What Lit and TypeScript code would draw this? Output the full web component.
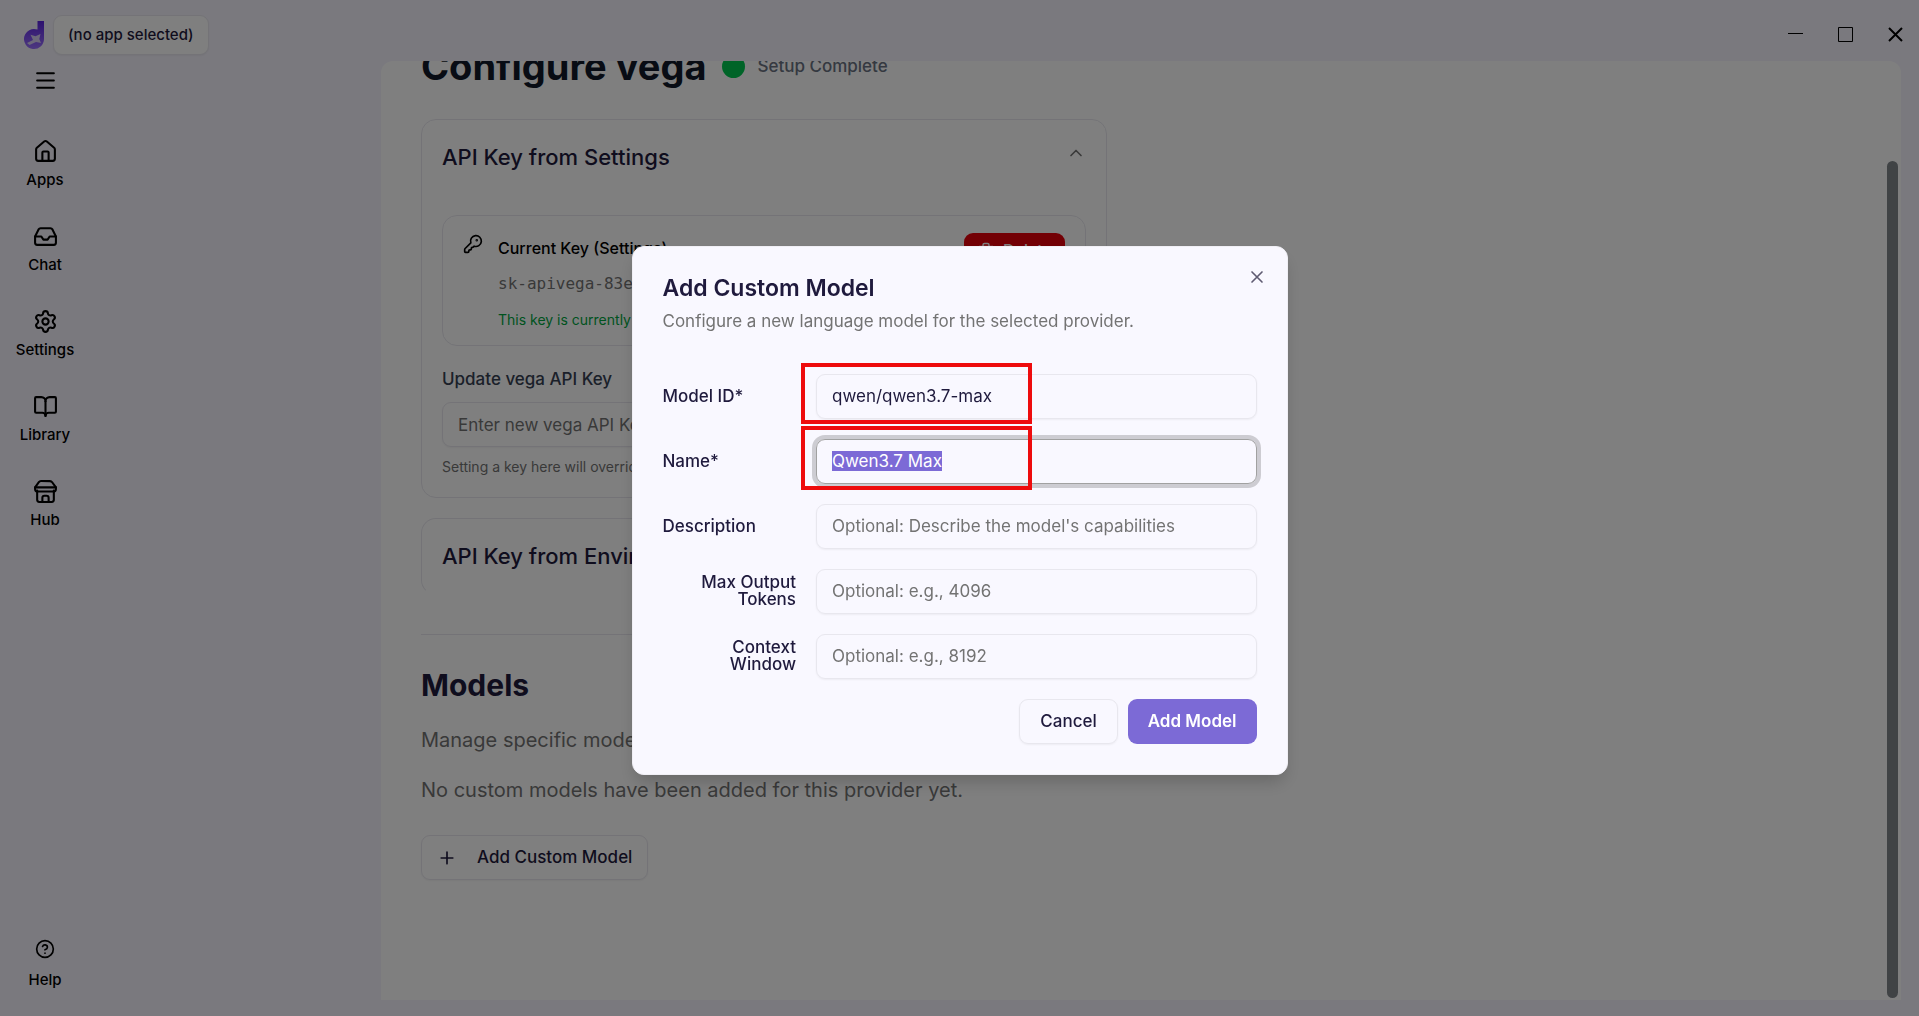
import { LitElement, html, css, svg } from "lit";
import { customElement } from "lit/decorators.js";

const icon = (size: number, body: unknown) => html`<svg
  class="icon"
  width=${size}
  height=${size}
  viewBox="0 0 24 24"
  fill="none"
  stroke="currentColor"
  stroke-width="2"
  stroke-linecap="round"
  stroke-linejoin="round"
  aria-hidden="true"
>${body}</svg>`;

const icons = {
  menu: svg`<path d="M4 5h16M4 12h16M4 19h16"/>`,
  home: svg`<path d="M15 21v-8a1 1 0 0 0-1-1h-4a1 1 0 0 0-1 1v8"/><path d="M3 10a2 2 0 0 1 .709-1.528l7-5.999a2 2 0 0 1 2.582 0l7 5.999A2 2 0 0 1 21 10v9a2 2 0 0 1-2 2H5a2 2 0 0 1-2-2z"/>`,
  inbox: svg`<path d="M22 12h-6l-2 3h-4l-2-3H2"/><path d="M5.45 5.11 2 12v6a2 2 0 0 0 2 2h16a2 2 0 0 0 2-2v-6l-3.45-6.89A2 2 0 0 0 16.76 4H7.24a2 2 0 0 0-1.79 1.11z"/>`,
  settings: svg`<path d="M9.671 4.136a2.34 2.34 0 0 1 4.659 0 2.34 2.34 0 0 0 3.319 1.915 2.34 2.34 0 0 1 2.33 4.033 2.34 2.34 0 0 0 0 3.831 2.34 2.34 0 0 1-2.33 4.033 2.34 2.34 0 0 0-3.319 1.915 2.34 2.34 0 0 1-4.659 0 2.34 2.34 0 0 0-3.32-1.915 2.34 2.34 0 0 1-2.33-4.033 2.34 2.34 0 0 0 0-3.831A2.34 2.34 0 0 1 6.35 6.051a2.34 2.34 0 0 0 3.319-1.915"/><circle cx="12" cy="12" r="3"/>`,
  book: svg`<path d="M12 7v14"/><path d="M3 18a1 1 0 0 1-1-1V4a1 1 0 0 1 1-1h5a4 4 0 0 1 4 4 4 4 0 0 1 4-4h5a1 1 0 0 1 1 1v13a1 1 0 0 1-1 1h-6a3 3 0 0 0-3 3 3 3 0 0 0-3-3z"/>`,
  store: svg`<path d="M4 11v9a2 2 0 0 0 2 2h12a2 2 0 0 0 2-2v-9"/><path d="M15 22v-4a2 2 0 0 0-2-2h-2a2 2 0 0 0-2 2v4"/><path d="M2 8h20"/><path d="M2 8l3.6-4.9A2.6 2.6 0 0 1 7.7 2h8.6a2.6 2.6 0 0 1 2.1 1.1L22 8v1.500a2.500 2.500 0 0 1-2.500 2.500h-15A2.500 2.500 0 0 1 2 9.500z"/>`,
  help: svg`<circle cx="12" cy="12" r="10"/><path d="M9.090 9a3 3 0 0 1 5.830 1c0 2-3 3-3 3"/><path d="M12 17h.01"/>`,
  key: svg`<path d="M2.586 17.414A2 2 0 0 0 2 18.828V21a1 1 0 0 0 1 1h3a1 1 0 0 0 1-1v-1a1 1 0 0 1 1-1h1a1 1 0 0 0 1-1v-1a1 1 0 0 1 1-1h.172a2 2 0 0 0 1.414-.586l.814-.814a6.500 6.500 0 1 0-4-4z"/><circle cx="16.500" cy="7.500" r=".5" fill="currentColor"/>`,
  trash: svg`<path d="M3 6h18M19 6v14a2 2 0 0 1-2 2H7a2 2 0 0 1-2-2V6M8 6V4a2 2 0 0 1 2-2h4a2 2 0 0 1 2 2v2M10 11v6M14 11v6"/>`,
  chevronUp: svg`<path d="m18 15-6-6-6 6"/>`,
  plus: svg`<path d="M5 12h14M12 5v14"/>`,
  close: svg`<path d="M18 6 6 18M6 6l12 12"/>`,
};

const base = css`
  :host, * { box-sizing: border-box; }
  * { margin: 0; }
  button, input { font: inherit; color: inherit; }
  button { cursor: pointer; }
  .icon { display: block; flex: none; }
  .outline {
    display: flex;
    align-items: center;
    background: transparent;
    border: 1px solid var(--line);
    border-radius: 9px;
    box-shadow: 0 1px 2px rgba(0, 0, 0, 0.05);
    font-weight: 500;
    white-space: nowrap;
  }
  .field {
    width: 100%;
    min-width: 0;
    height: 45px;
    padding: 0 15px;
    background: transparent;
    border: 1px solid var(--line);
    border-radius: 9px;
    box-shadow: 0 1px 2px rgba(0, 0, 0, 0.05);
    outline: none;
  }
  .field::placeholder { color: var(--muted); opacity: 1; }
`;

@customElement("title-bar")
class TitleBar extends LitElement {
  static styles = [
    base,
    css`
      :host { display: flex; flex: none; align-items: center; height: 60px; padding: 9px 13px 0 24px; }
      .logo { flex: none; margin-right: 8px; }
      .app { height: 40px; padding: 0 14px; background: #fff; font-size: 15px; }
      .window { display: flex; gap: 29px; margin-left: auto; }
      .control { display: flex; padding: 0; border: 0; background: none; color: #000; }
    `,
  ];
  render() {
    return html`
      <svg class="logo" width="21" height="30" viewBox="0 0 21 30" role="img" aria-label="Home">
        <defs>
          <linearGradient id="violet" x1="0" y1="0" x2="0" y2="1">
            <stop offset="0" stop-color="#5a22e0" />
            <stop offset="1" stop-color="#9a70ff" />
          </linearGradient>
        </defs>
        <path fill="url(#violet)" d="M13.500 1h6.500v18a10 10 0 1 1-6.500-9.400z" />
        <path fill="#d9d0f4" d="M3 23l6-3-2.500-5.200 5 1.400 5-2.200-1.200 5 1.700 4-5-1-6.500 3z" />
      </svg>
      <button class="outline app">(no app selected)</button>
      <div class="window">
        <button class="control" aria-label="Minimize">
          <svg width="21" height="21" viewBox="0 0 21 21"><path d="M3 9.500h15" stroke="#000" /></svg>
        </button>
        <button class="control" aria-label="Maximize">
          <svg width="21" height="21" viewBox="0 0 21 21"><path d="M3.500 3.500h14v14h-14z" fill="none" stroke="#000" /></svg>
        </button>
        <button class="control" aria-label="Close">
          <svg width="21" height="21" viewBox="0 0 21 21"><path d="m4 4 13 13M17 4 4 17" stroke="#000" stroke-width="2" /></svg>
        </button>
      </div>
    `;
  }
}

@customElement("side-nav")
class SideNav extends LitElement {
  static styles = [
    base,
    css`
      :host { display: flex; flex-direction: column; align-items: flex-start; width: 381px; flex: none; padding: 7px 0 23px; }
      .toggle { display: flex; justify-content: center; width: 90px; padding: 0; border: 0; background: none; color: #000; }
      .links { display: flex; flex-direction: column; gap: 31px; margin-top: 46px; }
      .link {
        display: flex; flex-direction: column; align-items: center; gap: 2px;
        width: 90px; color: #000; text-decoration: none;
        font-size: 15px; line-height: 27px; font-weight: 500;
      }
      .help { margin-top: auto; gap: 7px; }
    `,
  ];
  render() {
    const links: [string, unknown][] = [
      ["Apps", icons.home],
      ["Chat", icons.inbox],
      ["Settings", icons.settings],
      ["Library", icons.book],
      ["Hub", icons.store],
    ];
    return html`
      <button class="toggle" aria-label="Toggle sidebar">${icon(25, icons.menu)}</button>
      <nav class="links">
        ${links.map(([label, body]) => html`<a class="link" href="#">${icon(25, body)}${label}</a>`)}
      </nav>
      <a class="link help" href="#">${icon(20, icons.help)}Help</a>
    `;
  }
}

@customElement("provider-page")
class ProviderPage extends LitElement {
  static styles = [
    base,
    css`
      :host {
        position: relative; display: block; flex: 1; min-width: 0; overflow: hidden;
        background: #fff; border-radius: 12px 12px 0 0; color: var(--ink);
      }
      .scroll { height: 100%; overflow-y: auto; scrollbar-width: none; padding: 90px 40px 120px; }
      .column { width: 100%; max-width: 686px; }
      .head { display: flex; align-items: center; gap: 12px; margin-bottom: 30px; line-height: 45px; }
      .title { margin-right: 4px; font-size: 38px; font-weight: 700; color: #101828; white-space: nowrap; }
      .dot { width: 23px; height: 23px; border-radius: 50%; background: #00c950; }
      .status { font-size: 17px; font-weight: 500; color: #6a7282; }
      .card { border: 1px solid var(--line); border-radius: 15px; padding: 20px; }
      .card-closed { margin-top: 20px; border-bottom-color: transparent; }
      .accordion {
        display: flex; justify-content: space-between; align-items: flex-start; width: 100%;
        padding: 0; border: 0; background: none; text-align: left; font-size: 22px; line-height: 35px; font-weight: 500;
      }
      .accordion .icon { margin: 3px 0; color: #737373; }
      .current { display: flex; align-items: flex-start; gap: 15px; margin-top: 40px; padding: 17px 20px 10px; border: 1px solid var(--line); border-radius: 15px; color: #000; }
      .key { padding-top: 1px; }
      .lines { display: flex; flex-direction: column; gap: 6px; flex: 1; min-width: 0; line-height: 30px; }
      .name { font-weight: 500; font-size: 16px; }
      .secret { font-family: "DejaVu Sans Mono", "Liberation Mono", monospace; font-size: 16px; color: #737373; }
      .active { font-size: 14px; color: #00a63e; }
      .delete { display: flex; align-items: center; gap: 8px; height: 35px; padding: 0 13px; border: 0; border-radius: 9px; background: #e7000b; color: #fff; font-weight: 500; font-size: 16px; }
      .label { display: block; margin: 23px 0 13px; line-height: 20px; font-weight: 500; color: #364153; }
      .hint { margin-top: 10px; font-size: 14px; line-height: 20px; color: #737373; }
      .rule { margin: 39px 0 30px; border: 0; border-top: 1px solid var(--line); }
      .heading { font-size: 30px; line-height: 40px; font-weight: 700; }
      .copy { margin-top: 20px; font-size: 20px; line-height: 30px; color: #737373; }
      .add { height: 45px; margin-top: 30px; padding: 0 15px; gap: 20px; }
      .thumb { position: absolute; right: 3px; top: 100px; bottom: 2px; width: 11px; border-radius: 6px; background: #80868b; }
    `,
  ];
  firstUpdated() {
    const pane = this.renderRoot.querySelector(".scroll")!;
    requestAnimationFrame(() => (pane.scrollTop = pane.scrollHeight));
  }
  render() {
    return html`
      <main class="scroll">
        <div class="column">
          <header class="head">
            <h1 class="title">Configure vega</h1>
            <span class="dot"></span>
            <span class="status">Setup Complete</span>
          </header>
          <section class="card">
            <button class="accordion" aria-expanded="true">API Key from Settings ${icon(20, icons.chevronUp)}</button>
            <div class="current">
              <span class="key">${icon(20, icons.key)}</span>
              <div class="lines">
                <p class="name">Current Key (Settings)</p>
                <p class="secret">sk-apivega-83e</p>
                <p class="active">This key is currently</p>
              </div>
              <button class="delete">${icon(18, icons.trash)}Delete</button>
            </div>
            <label class="label" for="key">Update vega API Key</label>
            <input class="field" id="key" placeholder="Enter new vega API Key" />
            <p class="hint">Setting a key here will override</p>
          </section>
          <section class="card card-closed">
            <button class="accordion" aria-expanded="false">API Key from Environment</button>
          </section>
          <hr class="rule" />
          <h2 class="heading">Models</h2>
          <p class="copy">Manage specific models</p>
          <p class="copy">No custom models have been added for this provider yet.</p>
          <button class="outline add">${icon(20, icons.plus)}Add Custom Model</button>
        </div>
      </main>
      <div class="thumb"></div>
    `;
  }
}

@customElement("model-dialog")
class ModelDialog extends LitElement {
  static styles = [
    base,
    css`
      :host {
        position: fixed; inset: 0; display: grid; place-items: center;
        padding: 4px 16px 0; background: rgba(0, 0, 0, 0.5); color: var(--ink);
      }
      .dialog {
        position: relative; width: 100%; max-width: 656px; padding: 30px;
        background: #f9f8ff; border: 1px solid #f0eff5; border-radius: 12px;
        box-shadow: 0 10px 18px -4px rgba(0, 0, 0, 0.2);
      }
      .title { font-size: 23px; line-height: 22px; font-weight: 600; }
      .text { margin-top: 10px; line-height: 25px; color: var(--muted); }
      .close { position: absolute; top: 20px; right: 20px; padding: 0; border: 0; background: none; color: #5f5b72; }
      .form { display: grid; gap: 20px; margin-top: 40px; }
      .row { display: grid; grid-template-columns: repeat(4, minmax(0, 1fr)); column-gap: 20px; align-items: center; }
      .row .field { grid-column: span 3; }
      .label { font-weight: 500; line-height: 17px; }
      .label-end { text-align: right; }
      .focused { border-color: #a1a1a1; box-shadow: 0 0 0 4px #cdccd2; }
      .field::selection { background: #7c6ad6; color: #fff; }
      .actions { display: flex; justify-content: flex-end; gap: 10px; }
      .cancel, .submit { height: 45px; padding: 0 20px; }
      .submit { border: 0; border-radius: 9px; background: #7c6ad6; color: #fff; font-weight: 600; }
      .mark { position: absolute; border: 4px solid #ee0b0d; left: 168px; width: 231px; pointer-events: none; }
      .mark-id { top: 116px; height: 61px; }
      .mark-name { top: 179px; height: 64px; }
    `,
  ];
  firstUpdated() {
    const name = this.renderRoot.querySelector<HTMLInputElement>("#name")!;
    name.focus();
    name.select();
  }
  render() {
    return html`
      <div class="dialog" role="dialog" aria-modal="true" aria-labelledby="title">
        <h2 class="title" id="title">Add Custom Model</h2>
        <p class="text">Configure a new language model for the selected provider.</p>
        <form class="form">
          <div class="row">
            <label class="label" for="model">Model ID*</label>
            <input class="field" id="model" .value=${"qwen/qwen3.7-max"} />
          </div>
          <div class="row">
            <label class="label" for="name">Name*</label>
            <input class="field focused" id="name" .value=${"Qwen3.7 Max"} />
          </div>
          <div class="row">
            <label class="label" for="description">Description</label>
            <input class="field" id="description" placeholder="Optional: Describe the model's capabilities" />
          </div>
          <div class="row">
            <label class="label label-end" for="output">Max Output Tokens</label>
            <input class="field" id="output" placeholder="Optional: e.g., 4096" />
          </div>
          <div class="row">
            <label class="label label-end" for="context">Context Window</label>
            <input class="field" id="context" placeholder="Optional: e.g., 8192" />
          </div>
          <div class="actions">
            <button class="outline cancel" type="button">Cancel</button>
            <button class="submit" type="button">Add Model</button>
          </div>
        </form>
        <button class="close" aria-label="Close">${icon(20, icons.close)}</button>
        <div class="mark mark-id"></div>
        <div class="mark mark-name"></div>
      </div>
    `;
  }
}

@customElement("app-root")
class AppRoot extends LitElement {
  static styles = css`
    :host {
      --ink: #1f1a3d;
      --muted: #737373;
      --line: #e8e7ee;
      display: flex;
      flex-direction: column;
      height: 100vh;
      overflow: hidden;
      background: #f5f3fd;
      color: var(--ink);
      font: 17px/25px Inter, "Open Sans", sans-serif;
    }
    .body { display: flex; flex: 1; min-height: 0; padding: 1px 18px 16px 0; }
    side-nav { margin-bottom: -16px; }
  `;
  render() {
    return html`
      <title-bar></title-bar>
      <div class="body">
        <side-nav></side-nav>
        <provider-page></provider-page>
      </div>
      <model-dialog></model-dialog>
    `;
  }
}
